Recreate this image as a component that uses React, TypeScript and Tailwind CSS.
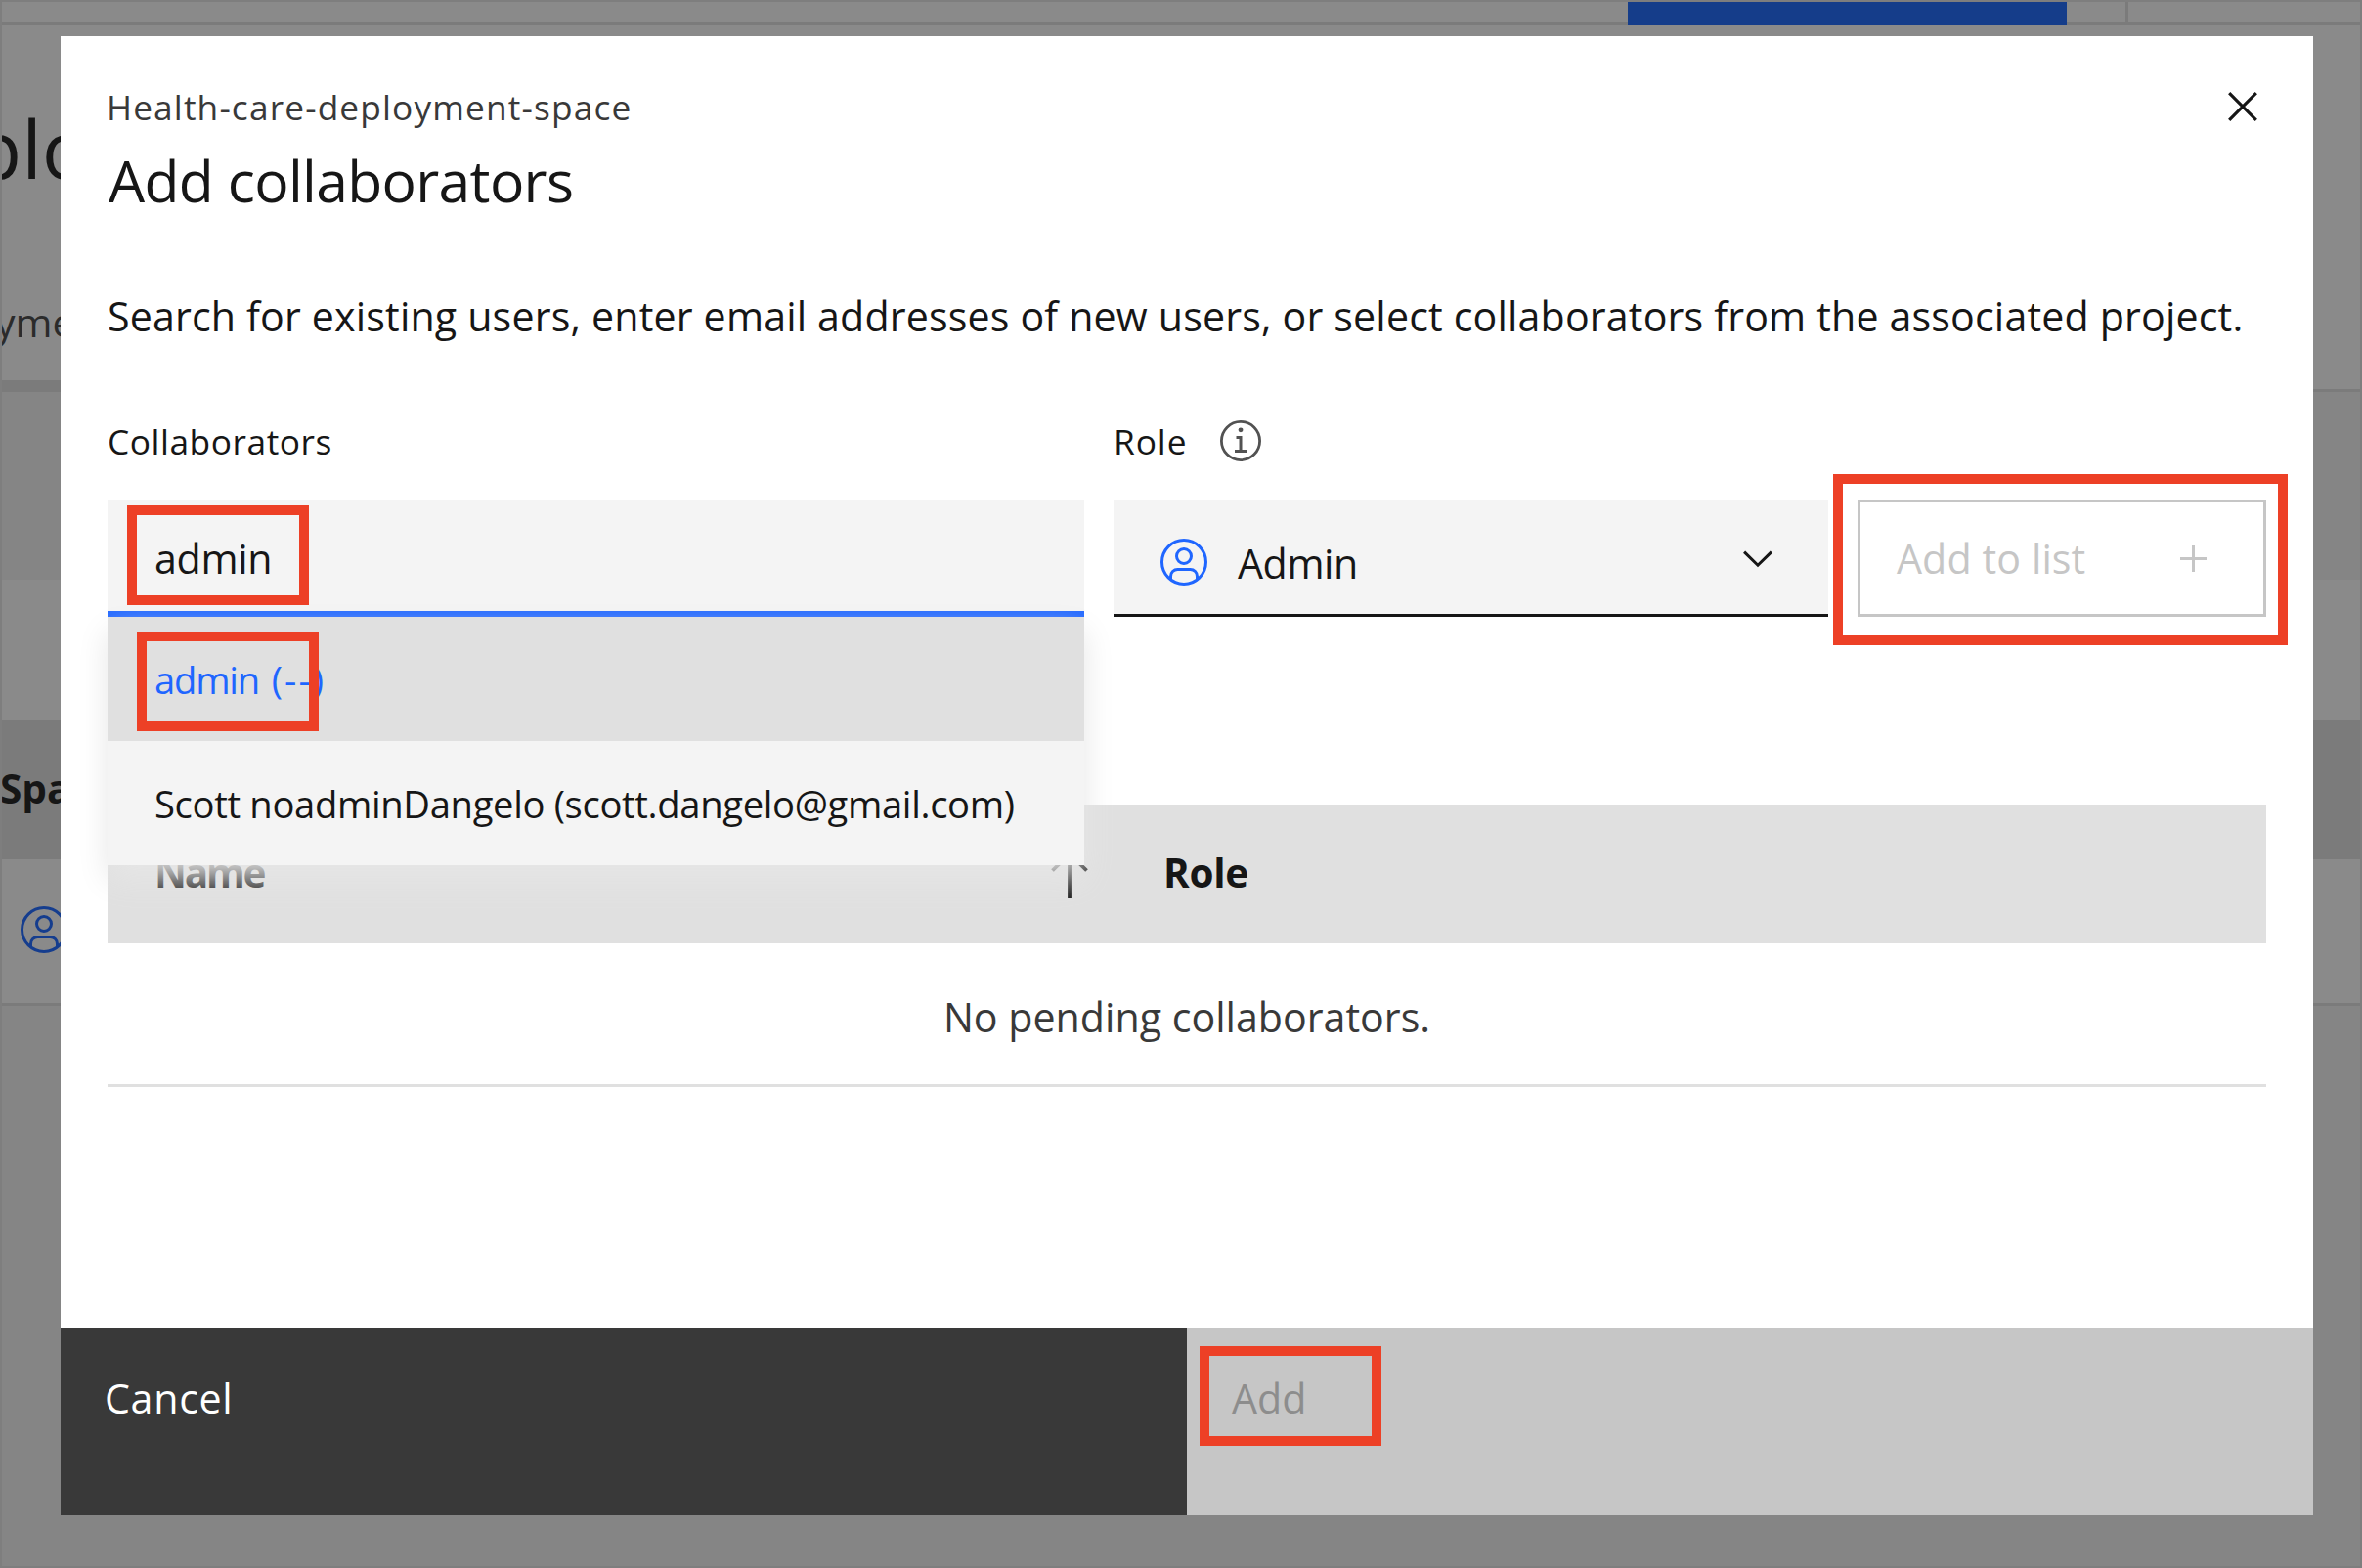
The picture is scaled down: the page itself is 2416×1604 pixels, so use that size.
import type { ReactNode } from "react";

function UserAvatar({ className }: { className?: string }) {
  return (
    <svg viewBox="0 0 48 48" fill="none" stroke="currentColor" strokeWidth="3" className={`size-12 shrink-0 ${className ?? ""}`}>
      <circle cx="24" cy="24" r="22.5" />
      <circle cx="24" cy="18" r="7.5" />
      <path d="M10.5 41.5V38.5a7 7 0 0 1 7-7h13a7 7 0 0 1 7 7V41.5" />
    </svg>
  );
}

function InfoIcon() {
  return (
    <svg viewBox="0 0 42 42" fill="none" stroke="currentColor" className="size-[42px] shrink-0 text-[#525252]">
      <circle cx="21" cy="21" r="19.6" strokeWidth="2.8" />
      <circle cx="21" cy="9.8" r="2.4" fill="currentColor" stroke="none" />
      <path d="M16.5 17.6H21V31M15 31.6H27.2" strokeWidth="3" />
    </svg>
  );
}

function CloseIcon() {
  return (
    <svg viewBox="0 0 30 30" fill="none" stroke="currentColor" strokeWidth="3.2" className="size-[30px]">
      <path d="M1.2 1.2L28.8 28.8M28.8 1.2L1.2 28.8" />
    </svg>
  );
}

function ChevronDown() {
  return (
    <svg viewBox="0 0 30 18" fill="none" stroke="currentColor" strokeWidth="3" className="mt-[5px] h-[18px] w-[30px]">
      <path d="M1.1 1.6L15 15.2L28.9 1.6" />
    </svg>
  );
}

function PlusIcon() {
  return (
    <svg viewBox="0 0 27 27" fill="none" stroke="currentColor" strokeWidth="3" className="size-[27px]">
      <path d="M13.5 0V27M0 13.5H27" />
    </svg>
  );
}

function SortArrow() {
  return (
    <svg viewBox="0 0 38 48" fill="none" stroke="currentColor" strokeWidth="3.8" className="mt-[5px] h-12 w-[38px]">
      <path d="M19 48V4M1.5 19.5L19 2.5L36.500 19.5" />
    </svg>
  );
}

function Highlight({ className }: { className: string }) {
  return <div className={`pointer-events-none absolute z-20 border-10 border-[#ed4026] ${className}`} />;
}

function Option({ children, active }: { children: ReactNode; active?: boolean }) {
  return (
    <div
      className={`h-[127px] pl-12 text-[38.2px] leading-[128px] whitespace-pre ${
        active ? "bg-[#e0e0e0] tracking-[-1.2px] text-[#1f66ff]" : "bg-[#f4f4f4] tracking-[-0.34px] text-[#161616]"
      }`}
    >
      {children}
    </div>
  );
}

function Backdrop() {
  return (
    <div className="flex h-[1604px] flex-col overflow-hidden border-2 border-[#7e7e7e] bg-[#858585] text-[#161616]">
      <div className="flex h-6 shrink-0 border-b-3 border-[#7b7b7b] bg-[#8a8a8a]">
        <div className="-mb-[3px] ml-[1663px] w-[449px] bg-[#153d8a]" />
        <div className="ml-[60px] w-[3px] bg-[#7b7b7b]" />
      </div>
      <div className="h-[375px] shrink-0 border-b-3 border-[#7b7b7b] bg-[#8a8a8a]">
        <div className="flex h-[375px] w-[130px] flex-col border-b-12 border-[#7b7b7b]">
          <div className="mt-[75px] -ml-[30px] text-[82px] leading-[100px]">plo</div>
          <div className="mt-[98px] -ml-[7px] text-[41px] leading-[60px] text-[#2b2b2b]">yment</div>
        </div>
      </div>
      <div className="h-[192px] shrink-0" />
      <div className="h-[144px] shrink-0 bg-[#8a8a8a]" />
      <div className="-ml-[2px] h-[142px] shrink-0 bg-[#7b7b7b] pb-[4px] text-[40.5px] leading-[139px] font-bold">Space</div>
      <div className="flex h-[150px] shrink-0 items-center border-b-3 border-[#7b7b7b] bg-[#8a8a8a] pl-[19px]">
        <UserAvatar className="-mt-[4px] text-[#153d8e]" />
      </div>
    </div>
  );
}

function Modal() {
  return (
    <div className="absolute top-[37px] left-[62px] z-10 flex h-[1513px] w-[2304px] flex-col bg-white text-[#161616]">
      <div className="flex h-[1321px] flex-col px-12 pt-[45px]">
        <div className="flex items-start justify-between">
          <div>
            <div className="-ml-px text-[35.3px] leading-[54px] tracking-[1.13px] text-[#393939]">Health-care-deployment-space</div>
            <h1 className="mt-3 ml-px text-[58.8px] leading-[72px] tracking-[-0.67px]">Add collaborators</h1>
          </div>
          <button className="mt-3 mr-[9px]">
            <CloseIcon />
          </button>
        </div>

        <p className="mt-[73px] text-[41.16px] leading-[60px] tracking-[0.155px] whitespace-nowrap">
          Search for existing users, enter email addresses of new users, or select collaborators from the associated project.
        </p>

        <div className="mt-[77px] grid grid-cols-[999px_731px_418px] gap-x-[30px] gap-y-[39px]">
          <label className="h-[42px] text-[35.3px] leading-[42px] tracking-[0.54px]">Collaborators</label>
          <div className="flex h-[42px] items-center">
            <span className="w-[109px] text-[35.3px] leading-[42px] tracking-[0.9px]">Role</span>
            <InfoIcon />
          </div>
          <div />

          <div className="relative h-[120px] border-b-6 border-[#1f66ff] bg-[#f4f4f4] pl-12">
            <span className="text-[41.16px] leading-[121px] tracking-[-0.3px]">admin</span>
            <Highlight className="top-[6px] left-[20px] h-[102px] w-[186px]" />
            <div className="absolute top-[120px] left-0 z-10 w-[999px] shadow-[0_15px_30px_#e6e6e6]">
              <Option active>
                admin <span className="ml-[4px] tracking-[2.1px]">(--)</span>
              </Option>
              <Option>Scott noadminDangelo (scott.dangelo@gmail.com)</Option>
              <Highlight className="top-[15px] left-[30px] h-[102px] w-[186px]" />
            </div>
          </div>

          <div className="flex h-[120px] items-center border-b-3 border-[#161616] bg-[#f4f4f4] pr-[57px] pl-12">
            <UserAvatar className="mt-[11px] text-[#1f66ff]" />
            <span className="mt-[12px] ml-[31px] flex-1 text-[41.16px] leading-[60px] tracking-[-0.4px]">Admin</span>
            <ChevronDown />
          </div>

          <button className="relative flex h-[120px] items-center justify-between border-3 border-[#c6c6c6] bg-white pr-[58px] pl-[37px] text-[41.16px] leading-[60px] tracking-[0.1px] text-[#c6c6c6]">
            <span>Add to list</span>
            <PlusIcon />
            <Highlight className="-top-[29px] -left-[28px] h-[175px] w-[465px]" />
          </button>
        </div>

        <div className="mt-[192px] flex h-[142px] items-center bg-[#e0e0e0] pb-[3px] text-[40.5px] leading-[60px] font-bold">
          <div className="flex w-[1029px] items-center justify-between pr-[26px] pl-12">
            <span className="tracking-[-2.2px]">Name</span>
            <SortArrow />
          </div>
          <div className="pl-[51px] tracking-[-0.3px]">Role</div>
        </div>
        <div className="flex h-[147px] items-center justify-center border-b-3 border-[#e0e0e0] pt-[5px] text-[41.16px] leading-[60px] text-[#393939]">
          No pending collaborators.
        </div>
      </div>

      <div className="flex h-[192px] text-[41.16px] leading-[60px]">
        <button className="flex w-1/2 items-start bg-[#393939] pt-[42px] pl-[45px] tracking-[0.7px] text-white">Cancel</button>
        <button className="relative flex w-1/2 items-start bg-[#c6c6c6] pt-[42px] pl-[46px] text-[#8d8d8d]">
          Add
          <Highlight className="top-[19px] left-[13px] h-[102px] w-[186px]" />
        </button>
      </div>
    </div>
  );
}

export default function App() {
  return (
    <div className="relative h-[1604px] w-[2416px] overflow-hidden font-['Open_Sans','Noto_Sans',sans-serif]">
      <Backdrop />
      <Modal />
    </div>
  );
}
